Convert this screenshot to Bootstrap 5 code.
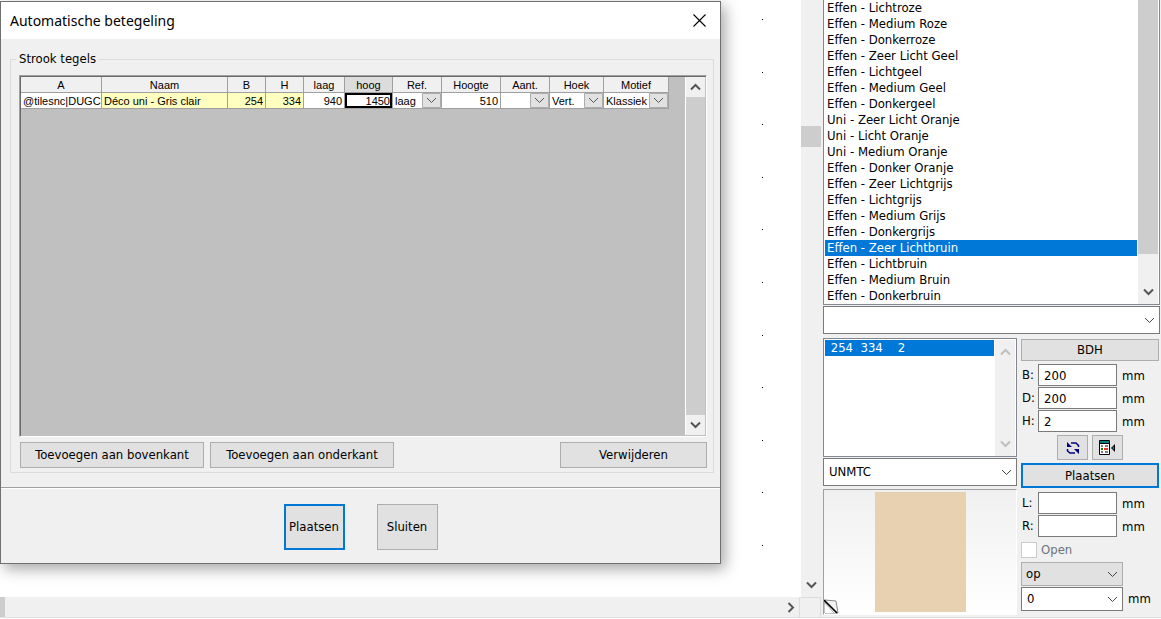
<!DOCTYPE html>
<html lang="nl">
<head>
<meta charset="utf-8">
<meta name="viewport" content="width=device-width, initial-scale=1">
<title>Automatische betegeling</title>
<link href="https://cdn.jsdelivr.net/npm/bootstrap@5.3.0/dist/css/bootstrap.min.css" rel="stylesheet">
<style>
  :root { --face: #f0f0f0; --btn: #e1e1e1; --edge: #adadad; --frame: #7a7a7a; --accent: #0078d7; }
  body { font-family: "DejaVu Sans Condensed", "DejaVu Sans", sans-serif; font-size: 13px; line-height: 16px; color: #000; background: #fff; }
  svg { display: block; }
  .app { min-height: 100vh; padding-bottom: 1px; }
  .btn { --bs-btn-font-size: 13px; --bs-btn-line-height: 16px; --bs-btn-padding-x: 0; --bs-btn-padding-y: 0; --bs-btn-border-radius: 0;
         --bs-btn-bg: var(--btn); --bs-btn-border-color: var(--edge); --bs-btn-color: #000;
         --bs-btn-hover-bg: #e5f1fb; --bs-btn-hover-border-color: var(--accent); --bs-btn-hover-color: #000; }
  .btn-main { border: 2px solid var(--accent); }
  .form-control, .form-select { min-height: 0; border: 1px solid var(--frame); border-radius: 0; color: #000; font-size: 13px; line-height: 16px; padding: 0 5px; }
  .form-select { background: #fff url("data:image/svg+xml,%3Csvg xmlns='http://www.w3.org/2000/svg' width='11' height='7'%3E%3Cpath d='M1 1l4.5 4.5L10 1' fill='none' stroke='%23444'/%3E%3C/svg%3E") no-repeat right 4px center; background-size: 11px 7px; }
  .select-flat { background-color: var(--btn); border-color: var(--edge); margin-bottom: 1px; padding-left: 4px; }

  /* drawing area */
  .work { min-width: 0; }
  .dots { width: 1px; margin-right: 38px; padding: 19px 0 51px; }
  .dots i { width: 1px; height: 1px; background: #000; }
  .bar { background: var(--face); }
  .bar-y { width: 20px; }
  .bar-x { height: 20px; }
  .thumb { background: #cdcdcd; }
  .corner { width: 22px; border: solid #dcdcdc; border-width: 1px 1px 0; background: var(--face); }

  /* dialog */
  .dialog { position: absolute; left: 0; top: 1px; width: 721px; background: var(--face); border: 1px solid #707070; box-shadow: 4px 5px 14px rgba(0,0,0,.35); }
  .titlebar { height: 37px; padding: 0 14px 0 9px; background: #fff; }
  .titlebar h1 { font: 14px/20px "Noto Sans", sans-serif; }
  .closer { border: 0; background: none; padding: 0; }
  .group { border: 1px solid #dcdcdc; margin: 12px 6px 14px 9px; padding: 0 6px 4px 8px; }
  .group legend { float: none; width: auto; font-size: 13px; line-height: 16px; margin: -9px 0 8px -3px; padding: 0 3px; background: var(--face); }
  .sheet { height: 362px; border: 1px solid; border-color: #a0a0a0 #fff #fff #a0a0a0; background: silver; box-shadow: inset 1px 1px #696969; padding: 1px; }
  .tiles { table-layout: fixed; width: 648px; font: 11px/14px "Liberation Sans", sans-serif; border-collapse: separate; border-spacing: 0; }
  .tiles th, .tiles td { height: 16px; padding: 0 2px; border: solid #a0a0a0; border-width: 0 1px 1px 0; font-weight: 400; overflow: hidden; white-space: nowrap; background: #fff; }
  .tiles th { text-align: center; background: var(--face); }
  .tiles .num { text-align: right; }
  .tiles .soft { background: #ffffc0; }
  .tiles th.now { background: #dcdcdc; }
  .tiles td.now { box-shadow: inset 0 0 0 2px #000; }
  .tiles td.drop { padding: 0; }
  .tiles select { display: block; appearance: none; width: 100%; height: 15px; border: 0; padding: 0 18px 0 2px; font: inherit; color: #000;
    background: #fff url("data:image/svg+xml,%3Csvg xmlns='http://www.w3.org/2000/svg' width='19' height='15'%3E%3Cpath d='M.5.5h18v14H.5z' fill='%23e1e1e1' stroke='%23adadad'/%3E%3Cpath d='M5 5l4.500 4.500L14 5' fill='none' stroke='%23555'/%3E%3C/svg%3E") no-repeat right top; }
  .sheet .bar { border-left: 1px solid #fff; }
  .sheet .end { height: 20px; }
  .actions { margin: 5px 0 0 1px; gap: 6px; }
  .actions .btn { width: 184px; height: 26px; }
  .actions .btn-del { width: 147px; }
  .foot { border-top: 1px solid #a0a0a0; box-shadow: inset 0 1px #fff; padding: 16px 0 13px; gap: 32px; }
  .foot .btn { width: 61px; height: 46px; }

  /* catalogue panel */
  .panel { width: 340px; padding: 0 1px 2px 2px; background: var(--face); border-bottom: 1px solid #dcdcdc; }
  .listing { border: 1px solid #828790; background: #fff; padding-right: 1px; }
  .listing .list-group { padding: 0 1px; }
  .listing .list-group-item { margin: 0; padding: 0 2px; border: 0; border-radius: 0; color: #000; line-height: 16px; white-space: pre; }
  .listing .list-group-item.active { margin: 0; background: var(--accent); color: #fff; }
  .top-list { border-top: 0; }
  .box { height: 28px; }
  .filter { margin-top: 1px; }
  .left-col { width: 194px; }
  .right-col { width: 138px; }
  .sizes { height: 119px; padding-top: 1px; margin-bottom: 1px; }
  .preview { border: 1px solid #a0a0a0; border-right-color: #fff; border-bottom-color: #fff; background: linear-gradient(#f0f0f0, #fff); position: relative; min-height: 126px; margin-top: 3px; }
  .swatch { width: 91px; margin: 2px 0; background: #e8d1b0; }
  .fold { position: absolute; left: 0; bottom: 0; }
  .line { height: 23px; }
  .line label { width: 17px; padding: 3px 0 0 1px; }
  .line .form-control { width: 79px; height: 22px; }
  .unit { padding-left: 5px; padding-top: 4px; }
  .tools { padding-top: 2px; }
  .tool { width: 31px; height: 25px; }
  .btn-bdh { height: 22px; margin: 1px 0 3px; }
  .btn-place { height: 25px; margin: 3px 0 4px; }
  .form-check-input { width: 16px; height: 16px; margin: 0; border-radius: 0 !important; }
  .form-check-input:disabled { opacity: 1; border-color: #ccc; }
  .drop-size { width: 102px; height: 24px; }
</style>
</head>
<body>
<div class="app d-flex">
  <main class="work flex-grow-1 d-flex flex-column position-relative">
    <div class="d-flex flex-grow-1">
      <div class="dots ms-auto d-flex flex-column justify-content-between"><i></i><i></i><i></i><i></i><i></i><i></i><i></i><i></i><i></i><i></i><i></i></div>
      <div class="bar bar-y d-flex flex-column align-items-center">
        <div class="thumb w-100" style="height:21px;margin-top:126px"></div>
        <svg class="mt-auto mb-2" width="11" height="8"><path d="M1 1.500l4.500 4.500L10 1.500" fill="none" stroke="#555" stroke-width="2"/></svg>
      </div>
    </div>
    <div class="bar-x bar d-flex align-items-center">
      <div class="thumb h-100" style="width:5px"></div>
      <svg class="ms-auto me-1" width="8" height="11"><path d="M1.500 1l4.500 4.500L1.500 10" fill="none" stroke="#555" stroke-width="2"/></svg>
      <div class="corner h-100"></div>
    </div>
    <div class="border-top"></div>

    <section class="dialog" role="dialog" aria-labelledby="dlg-title">
      <header class="titlebar d-flex align-items-center justify-content-between">
        <h1 id="dlg-title" class="m-0">Automatische betegeling</h1>
        <button type="button" class="closer" aria-label="Sluiten"><svg width="13" height="13"><path d="M.5.5l12 12m0-12l-12 12" stroke="#000" stroke-width="1.100"/></svg></button>
      </header>
      <fieldset class="group">
        <legend>Strook tegels</legend>
        <div class="sheet d-flex">
          <div class="flex-grow-1">
            <table class="tiles">
              <colgroup><col style="width:81px"><col style="width:126px"><col style="width:38px"><col style="width:38px"><col style="width:41px"><col style="width:48px"><col style="width:49px"><col style="width:59px"><col style="width:49px"><col style="width:54px"><col style="width:65px"></colgroup>
              <thead><tr><th>A</th><th>Naam</th><th>B</th><th>H</th><th>laag</th><th class="now">hoog</th><th>Ref.</th><th>Hoogte</th><th>Aant.</th><th>Hoek</th><th>Motief</th></tr></thead>
              <tbody><tr>
                <td>@tilesnc|DUGC</td><td class="soft">Déco uni - Gris clair</td><td class="soft num">254</td><td class="soft num">334</td><td class="num">940</td><td class="num now">1450</td>
                <td class="drop"><select aria-label="Ref."><option>laag</option></select></td><td class="num">510</td>
                <td class="drop"><select aria-label="Aant."><option></option></select></td>
                <td class="drop"><select aria-label="Hoek"><option>Vert.</option></select></td>
                <td class="drop"><select aria-label="Motief"><option>Klassiek</option></select></td>
              </tr></tbody>
            </table>
          </div>
          <div class="bar bar-y d-flex flex-column">
            <div class="end d-flex align-items-center justify-content-center"><svg width="11" height="8"><path d="M1 6.500L5.500 2 10 6.500" fill="none" stroke="#555" stroke-width="2"/></svg></div>
            <div class="thumb flex-grow-1"></div>
            <div class="end d-flex align-items-center justify-content-center"><svg width="11" height="8"><path d="M1 1.500L5.500 6 10 1.500" fill="none" stroke="#555" stroke-width="2"/></svg></div>
          </div>
        </div>
        <div class="actions d-flex">
          <button type="button" class="btn">Toevoegen aan bovenkant</button>
          <button type="button" class="btn">Toevoegen aan onderkant</button>
          <button type="button" class="btn btn-del ms-auto">Verwijderen</button>
        </div>
      </fieldset>
      <footer class="foot d-flex justify-content-center">
        <button type="button" class="btn btn-main">Plaatsen</button>
        <button type="button" class="btn">Sluiten</button>
      </footer>
    </section>
  </main>

  <aside class="panel d-flex flex-column flex-shrink-0">
    <div class="listing top-list d-flex">
      <ul class="list-group list-group-flush flex-grow-1">
        <li class="list-group-item">Effen - Lichtroze</li>
        <li class="list-group-item">Effen - Medium Roze</li>
        <li class="list-group-item">Effen - Donkerroze</li>
        <li class="list-group-item">Effen - Zeer Licht Geel</li>
        <li class="list-group-item">Effen - Lichtgeel</li>
        <li class="list-group-item">Effen - Medium Geel</li>
        <li class="list-group-item">Effen - Donkergeel</li>
        <li class="list-group-item">Uni - Zeer Licht Oranje</li>
        <li class="list-group-item">Uni - Licht Oranje</li>
        <li class="list-group-item">Uni - Medium Oranje</li>
        <li class="list-group-item">Effen - Donker Oranje</li>
        <li class="list-group-item">Effen - Zeer Lichtgrijs</li>
        <li class="list-group-item">Effen - Lichtgrijs</li>
        <li class="list-group-item">Effen - Medium Grijs</li>
        <li class="list-group-item">Effen - Donkergrijs</li>
        <li class="list-group-item active">Effen - Zeer Lichtbruin</li>
        <li class="list-group-item">Effen - Lichtbruin</li>
        <li class="list-group-item">Effen - Medium Bruin</li>
        <li class="list-group-item">Effen - Donkerbruin</li>
      </ul>
      <div class="bar bar-y d-flex flex-column align-items-center">
        <div class="thumb w-100" style="height:254px"></div>
        <svg class="mt-auto mb-2" width="11" height="8"><path d="M1 1.500l4.500 4.500L10 1.500" fill="none" stroke="#555" stroke-width="2"/></svg>
      </div>
    </div>
    <select class="form-select box filter" aria-label="Filter"><option></option></select>

    <div class="d-flex flex-grow-1 pt-1">
      <div class="left-col d-flex flex-column">
        <div class="listing sizes d-flex">
          <ul class="list-group list-group-flush flex-grow-1">
            <li class="list-group-item active"> 254  334    2</li>
          </ul>
          <div class="bar bar-y d-flex flex-column align-items-center justify-content-between py-2">
            <svg width="11" height="8"><path d="M1 6.500L5.500 2 10 6.500" fill="none" stroke="#bfbfbf" stroke-width="2"/></svg>
            <svg width="11" height="8"><path d="M1 1.500L5.500 6 10 1.500" fill="none" stroke="#bfbfbf" stroke-width="2"/></svg>
          </div>
        </div>
        <select class="form-select box" aria-label="Code"><option>UNMTC</option></select>
        <div class="preview flex-grow-1 d-flex justify-content-center">
          <div class="swatch"></div>
          <svg class="fold" width="15" height="15"><path d="M1 1l11 1 2 12H1z" fill="#f4f4f4" stroke="#888"/><path d="M1 3v11h11z" fill="#fff"/><path d="M0 1l13 13" stroke="#000" stroke-width="1.600"/><path d="M0 3l11 12" stroke="#aaa" stroke-width="1"/></svg>
        </div>
      </div>

      <form class="right-col ms-1">
        <button type="button" class="btn btn-bdh w-100">BDH</button>
        <div class="line d-flex"><label for="fb">B:</label><input id="fb" class="form-control" value="200"><span class="unit">mm</span></div>
        <div class="line d-flex"><label for="fd">D:</label><input id="fd" class="form-control" value="200"><span class="unit">mm</span></div>
        <div class="line d-flex"><label for="fh">H:</label><input id="fh" class="form-control" value="2"><span class="unit">mm</span></div>
        <div class="tools d-flex justify-content-center gap-1">
          <button type="button" class="btn tool d-flex align-items-center justify-content-center" aria-label="Omwisselen">
            <svg width="14" height="14" fill="none" stroke="#000080" stroke-width="1.500"><path d="M5 2h5l2.500 2.500V6M1.500 8v2L4 12h5"/><path d="M1 1v5h5zM13 13V8H8z" fill="#000080" stroke="none"/></svg>
          </button>
          <button type="button" class="btn tool d-flex align-items-center justify-content-center" aria-label="Eigenschappen">
            <svg width="17" height="15"><path d="M.5.5h10v14H.5z" fill="#fff" stroke="#000"/><path d="M1 1h9v2H1z" fill="#008080"/><path d="M1 3.500h9" stroke="#000"/><path d="M2 6h2M6 6h3M2 12h2M6 12h3" stroke="#000"/><path d="M2 9h2" stroke="#080" stroke-width="2"/><path d="M5 9h4" stroke="#e33" stroke-width="2"/><path d="M16 4v8l-4-4z" fill="#000"/><path d="M15 6v4l-2-2z" fill="#008080"/></svg>
          </button>
        </div>
        <button type="button" class="btn btn-main btn-place w-100">Plaatsen</button>
        <div class="line d-flex"><label for="fl">L:</label><input id="fl" class="form-control"><span class="unit">mm</span></div>
        <div class="line d-flex"><label for="fr">R:</label><input id="fr" class="form-control"><span class="unit">mm</span></div>
        <div class="d-flex align-items-center my-1"><input id="fo" type="checkbox" class="form-check-input" disabled><label for="fo" class="ps-1 text-secondary">Open</label></div>
        <select class="form-select select-flat drop-size" aria-label="Positie"><option>op</option></select>
        <div class="d-flex"><select class="form-select drop-size" aria-label="Afstand"><option>0</option></select><span class="unit">mm</span></div>
      </form>
    </div>
  </aside>
</div>
<script src="https://cdn.jsdelivr.net/npm/bootstrap@5.3.0/dist/js/bootstrap.bundle.min.js"></script>
</body>
</html>
